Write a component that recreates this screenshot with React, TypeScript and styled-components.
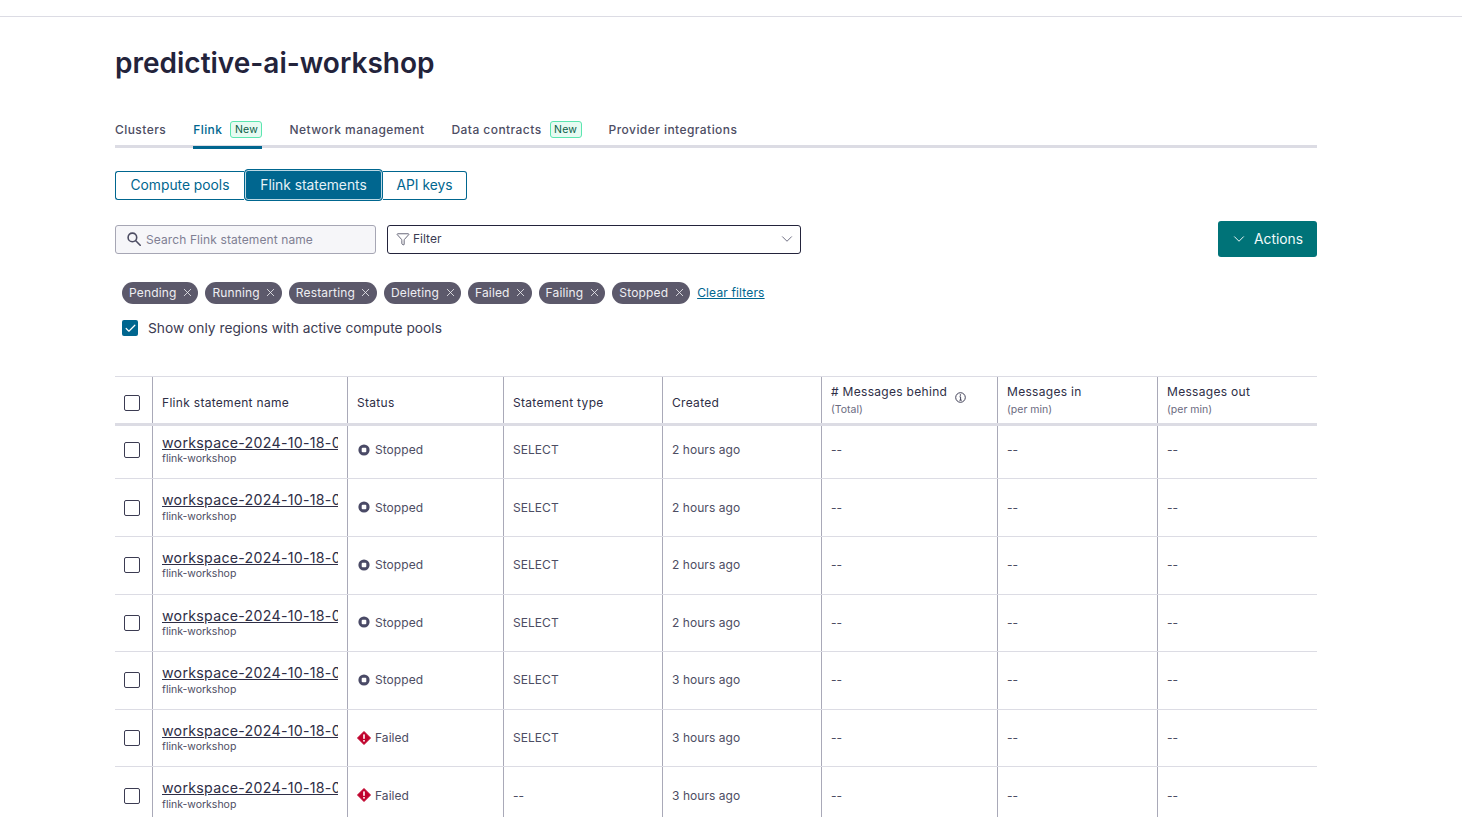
import React from 'react'
import styled, { createGlobalStyle } from 'styled-components'
import { Check, ChevronDown, Filter as FilterIcon, X } from 'lucide-react'

const GlobalStyle = createGlobalStyle`
  html, body {
    margin: 0;
    padding: 0;
    background: #fff;
    height: 817px;
    overflow: hidden;
    font-family: Inter, "Liberation Sans", sans-serif;
    color: #24243c;
  }
`

const Page = styled.main`
  margin-top: 16px;
  border-top: 1px solid #dcdce4;
  padding: 0 145px 0 115px;
`

const Title = styled.h1`
  margin: 27px 0 0;
  font-size: 28px;
  line-height: 38px;
  font-weight: 600;
  color: #23233b;
`

const Tabs = styled.nav`
  display: flex;
  gap: 27px;
  margin-top: 34px;
  height: 29px;
  border-bottom: 3px solid #dcdce4;
`

const Tab = styled.a<{ $active?: boolean }>`
  display: flex;
  align-items: flex-start;
  gap: 8px;
  height: 33px;
  padding-top: 6px;
  box-sizing: border-box;
  font-size: 12px;
  line-height: 16px;
  font-weight: 500;
  letter-spacing: 0.44px;
  color: ${p => (p.$active ? '#00668f' : '#4d4d63')};
  border-bottom: ${p => (p.$active ? '3px solid #00668f' : 'none')};
`

const NewBadge = styled.span`
  box-sizing: border-box;
  font-size: 10.5px;
  line-height: 16px;
  height: 17px;
  padding: 0 3.5px;
  margin-top: -1px;
  font-weight: 400;
  letter-spacing: 0.2px;
  color: #0a5c45;
  background: #e6fbf2;
  border: 1px solid #5ce6b0;
  border-radius: 3px;
`

const Segments = styled.div`
  display: flex;
  margin-top: 23px;
  height: 29px;
`

const Segment = styled.button<{ $active?: boolean; $width: number; $first?: boolean; $last?: boolean }>`
  box-sizing: border-box;
  width: ${p => p.$width}px;
  height: ${p => (p.$active ? 32 : 29)}px;
  margin-top: ${p => (p.$active ? -2 : 0)}px;
  padding: ${p => (p.$active ? '0' : '0 0 1px')};
  font-family: inherit;
  font-size: 13.8px;
  font-weight: 400;
  color: ${p => (p.$active ? '#e6f2f7' : '#00668f')};
  background: ${p => (p.$active ? '#00668f' : '#fff')};
  border: 1px solid #00668f;
  border-left-width: ${p => (p.$last ? 0 : 1)}px;
  border-right-width: ${p => (p.$first ? 0 : 1)}px;
  border-radius: ${p => (p.$active ? '4px' : p.$first ? '3px 0 0 3px' : '0 3px 3px 0')};
  box-shadow: ${p => (p.$active ? 'inset 0 0 0 1px #bcd8e4' : 'none')};
`

const Toolbar = styled.div`
  display: flex;
  align-items: center;
  margin-top: 21px;
  height: 36px;
`

const SearchBox = styled.div`
  box-sizing: border-box;
  display: flex;
  align-items: center;
  gap: 5px;
  width: 261px;
  height: 29px;
  padding-left: 11px;
  font-size: 12px;
  letter-spacing: 0.1px;
  color: #7f7f93;
  background: #f6f6f9;
  border: 1px solid #a6a6b4;
  border-radius: 3px;
`

const FilterBox = styled.div`
  box-sizing: border-box;
  display: flex;
  align-items: center;
  width: 414px;
  height: 29px;
  margin-left: 11px;
  padding: 0 4px 0 7.5px;
  font-size: 12px;
  color: #3b3b52;
  background: #fff;
  border: 1px solid #23233b;
  border-radius: 3px;
  span {
    margin: 0 0 2px 3.5px;
    flex: 1;
  }
`

const ActionsButton = styled.button`
  box-sizing: border-box;
  display: flex;
  align-items: center;
  gap: 6px;
  width: 99px;
  height: 36px;
  margin-left: auto;
  padding: 0 0 0 12px;
  font-family: inherit;
  font-size: 13.8px;
  color: #f2fafa;
  background: #007378;
  border: 0;
  border-radius: 3px;
`

const Tags = styled.div`
  display: flex;
  align-items: center;
  gap: 7px;
  margin: 25px 0 0 7px;
  height: 22px;
`

const Tag = styled.span`
  display: flex;
  align-items: center;
  gap: 4.5px;
  box-sizing: border-box;
  height: 22px;
  padding: 0 4.5px 1px 7px;
  font-size: 12px;
  letter-spacing: 0.15px;
  color: #eeeef2;
  background: #5c596b;
  border-radius: 11px;
`

const ClearLink = styled.a`
  margin-bottom: 1px;
  font-size: 12px;
  letter-spacing: 0.15px;
  color: #00668f;
  text-decoration: underline;
`

const ShowOnly = styled.label`
  display: flex;
  align-items: center;
  gap: 10px;
  margin: 14px 0 0 7px;
  height: 20px;
  font-size: 13.75px;
  color: #3b3b52;
`

const CheckedBox = styled.span`
  display: flex;
  align-items: center;
  justify-content: center;
  width: 16px;
  height: 16px;
  color: #fff;
  background: #00668f;
  border-radius: 2px;
`

const Table = styled.section`
  margin-top: 38px;
  border-top: 1px solid #dcdce4;
`

const columns = '37px 195px 156px 159px 159px 176px 160px 1fr'

const HeaderRow = styled.div`
  position: relative;
  z-index: 1;
  display: grid;
  grid-template-columns: ${columns};
  box-sizing: border-box;
  height: 49px;
  margin-bottom: -4.25px;
  border-bottom: 3px solid #dcdce4;
`

const Row = styled.div`
  display: grid;
  grid-template-columns: ${columns};
  box-sizing: border-box;
  height: 57.6px;
  border-bottom: 1px solid #dcdce4;
`

const Cell = styled.div<{ $first?: boolean }>`
  display: flex;
  align-items: center;
  box-sizing: border-box;
  min-width: 0;
  padding: 0 9px 1px;
  font-size: 12px;
  letter-spacing: 0.05px;
  color: #4d4d63;
  border-left: ${p => (p.$first ? '0' : '1px solid #a9a9b8')};
`

const HeadCell = styled(Cell)<{ $stacked?: boolean }>`
  align-items: ${p => (p.$stacked ? 'flex-start' : 'flex-end')};
  padding-top: ${p => (p.$stacked ? 7 : 0)}px;
  padding-bottom: ${p => (p.$stacked ? 0 : 13)}px;
  flex-direction: ${p => (p.$stacked ? 'column' : 'row')};
  letter-spacing: 0.3px;
  color: #2e2e46;
`

const CheckCell = styled(Cell)<{ $head?: boolean }>`
  justify-content: flex-start;
  padding: ${p => (p.$head ? '6px 0 0 9px' : '0 0 0 9px')};
`

const Box = styled.span`
  box-sizing: border-box;
  display: block;
  width: 16px;
  height: 16px;
  background: #fff;
  border: 1px solid #3b3b52;
  border-radius: 2px;
`

const HeadTop = styled.span`
  display: flex;
  align-items: flex-start;
  line-height: 16px;
  min-height: 19px;
`

const HeadSub = styled.span`
  font-size: 10.5px;
  line-height: 14px;
  letter-spacing: 0;
  color: #6b6b7f;
`

const InfoIcon = styled.svg`
  margin-left: 8px;
  margin-top: 8px;
`

const NameCell = styled(Cell)`
  display: block;
  padding-top: 12px;
`

const NameLink = styled.a`
  display: block;
  overflow: hidden;
  white-space: nowrap;
  font-size: 14.2px;
  line-height: 18px;
  letter-spacing: 0.27px;
  color: #2e2e46;
  text-decoration: underline;
`

const Workspace = styled.div`
  margin-top: 0.5px;
  font-size: 10.5px;
  line-height: 13px;
  letter-spacing: 0;
  color: #4d4d63;
`

const StatusWrap = styled.span`
  display: flex;
  align-items: center;
  gap: 4px;
`

const IconSlot = styled.span`
  display: flex;
  align-items: center;
  justify-content: center;
  width: 14px;
`

const SearchGlass = () => (
  <svg width="14" height="14" viewBox="0 0 14 14" fill="none" stroke="#4d4d63" strokeWidth="1.6">
    <circle cx="5.4" cy="5.4" r="4.3" />
    <path d="M8.5 8.5 13.2 13.2" strokeLinecap="round" />
  </svg>
)

const StoppedIcon = () => (
  <svg width="12" height="12" viewBox="0 0 12 12">
    <circle cx="6" cy="6" r="5.6" fill="#4a4a66" />
    <rect x="3.7" y="3.7" width="4.6" height="4.6" rx="1" fill="#fff" />
  </svg>
)

const FailedIcon = () => (
  <svg width="14" height="14" viewBox="0 0 14 14">
    <path d="M7 .5 13.5 7 7 13.5.5 7z" fill="#c0022d" strokeLinejoin="round" stroke="#c0022d" />
    <rect x="6.2" y="3.4" width="1.6" height="4.4" fill="#fff" />
    <rect x="6.2" y="9" width="1.6" height="1.6" fill="#fff" />
  </svg>
)

const filters = ['Pending', 'Running', 'Restarting', 'Deleting', 'Failed', 'Failing', 'Stopped']

const rows = [
  { status: 'Stopped', type: 'SELECT', created: '2 hours ago' },
  { status: 'Stopped', type: 'SELECT', created: '2 hours ago' },
  { status: 'Stopped', type: 'SELECT', created: '2 hours ago' },
  { status: 'Stopped', type: 'SELECT', created: '2 hours ago' },
  { status: 'Stopped', type: 'SELECT', created: '3 hours ago' },
  { status: 'Failed', type: 'SELECT', created: '3 hours ago' },
  { status: 'Failed', type: '--', created: '3 hours ago' },
]

const App = () => {
  return (
    <Page>
      <GlobalStyle />
      <Title>predictive-ai-workshop</Title>
      <Tabs>
        <Tab>Clusters</Tab>
        <Tab $active>
          Flink <NewBadge>New</NewBadge>
        </Tab>
        <Tab>Network management</Tab>
        <Tab>
          Data contracts <NewBadge>New</NewBadge>
        </Tab>
        <Tab>Provider integrations</Tab>
      </Tabs>
      <Segments>
        <Segment $first $width={129}>Compute pools</Segment>
        <Segment $active $width={139}>Flink statements</Segment>
        <Segment $last $width={84}>API keys</Segment>
      </Segments>
      <Toolbar>
        <SearchBox>
          <SearchGlass />
          Search Flink statement name
        </SearchBox>
        <FilterBox>
          <FilterIcon size={14} strokeWidth={1.3} />
          <span>Filter</span>
          <ChevronDown size={18} color="#6b6b7f" strokeWidth={1.3} />
        </FilterBox>
        <ActionsButton>
          <ChevronDown size={18} strokeWidth={1.3} />
          Actions
        </ActionsButton>
      </Toolbar>
      <Tags>
        {filters.map(name => (
          <Tag key={name}>
            {name}
            <X size={13} strokeWidth={1.5} />
          </Tag>
        ))}
        <ClearLink>Clear filters</ClearLink>
      </Tags>
      <ShowOnly>
        <CheckedBox>
          <Check size={13} strokeWidth={2.2} />
        </CheckedBox>
        Show only regions with active compute pools
      </ShowOnly>
      <Table>
        <HeaderRow>
          <CheckCell $first $head><Box /></CheckCell>
          <HeadCell>Flink statement name</HeadCell>
          <HeadCell>Status</HeadCell>
          <HeadCell>Statement type</HeadCell>
          <HeadCell>Created</HeadCell>
          <HeadCell $stacked>
            <HeadTop>
              # Messages behind
              <InfoIcon width="11" height="11" viewBox="0 0 11 11">
                <circle cx="5.5" cy="5.5" r="4.8" fill="none" stroke="#2e2e46" strokeWidth="0.9" />
                <circle cx="5.4" cy="3" r="0.7" fill="#2e2e46" />
                <path d="M4.5 4.8h1.1v3.2M4.4 8.2h2.4" fill="none" stroke="#2e2e46" strokeWidth="0.9" />
              </InfoIcon>
            </HeadTop>
            <HeadSub>(Total)</HeadSub>
          </HeadCell>
          <HeadCell $stacked>
            <HeadTop>Messages in</HeadTop>
            <HeadSub>(per min)</HeadSub>
          </HeadCell>
          <HeadCell $stacked>
            <HeadTop>Messages out</HeadTop>
            <HeadSub>(per min)</HeadSub>
          </HeadCell>
        </HeaderRow>
        {rows.map((row, index) => (
          <Row key={index}>
            <CheckCell $first><Box /></CheckCell>
            <NameCell>
              <NameLink>workspace-2024-10-18-094512-statement</NameLink>
              <Workspace>flink-workshop</Workspace>
            </NameCell>
            <Cell>
              <StatusWrap>
                <IconSlot>{row.status === 'Failed' ? <FailedIcon /> : <StoppedIcon />}</IconSlot>
                {row.status}
              </StatusWrap>
            </Cell>
            <Cell>{row.type}</Cell>
            <Cell>{row.created}</Cell>
            <Cell>--</Cell>
            <Cell>--</Cell>
            <Cell>--</Cell>
          </Row>
        ))}
      </Table>
    </Page>
  )
}

export default App
